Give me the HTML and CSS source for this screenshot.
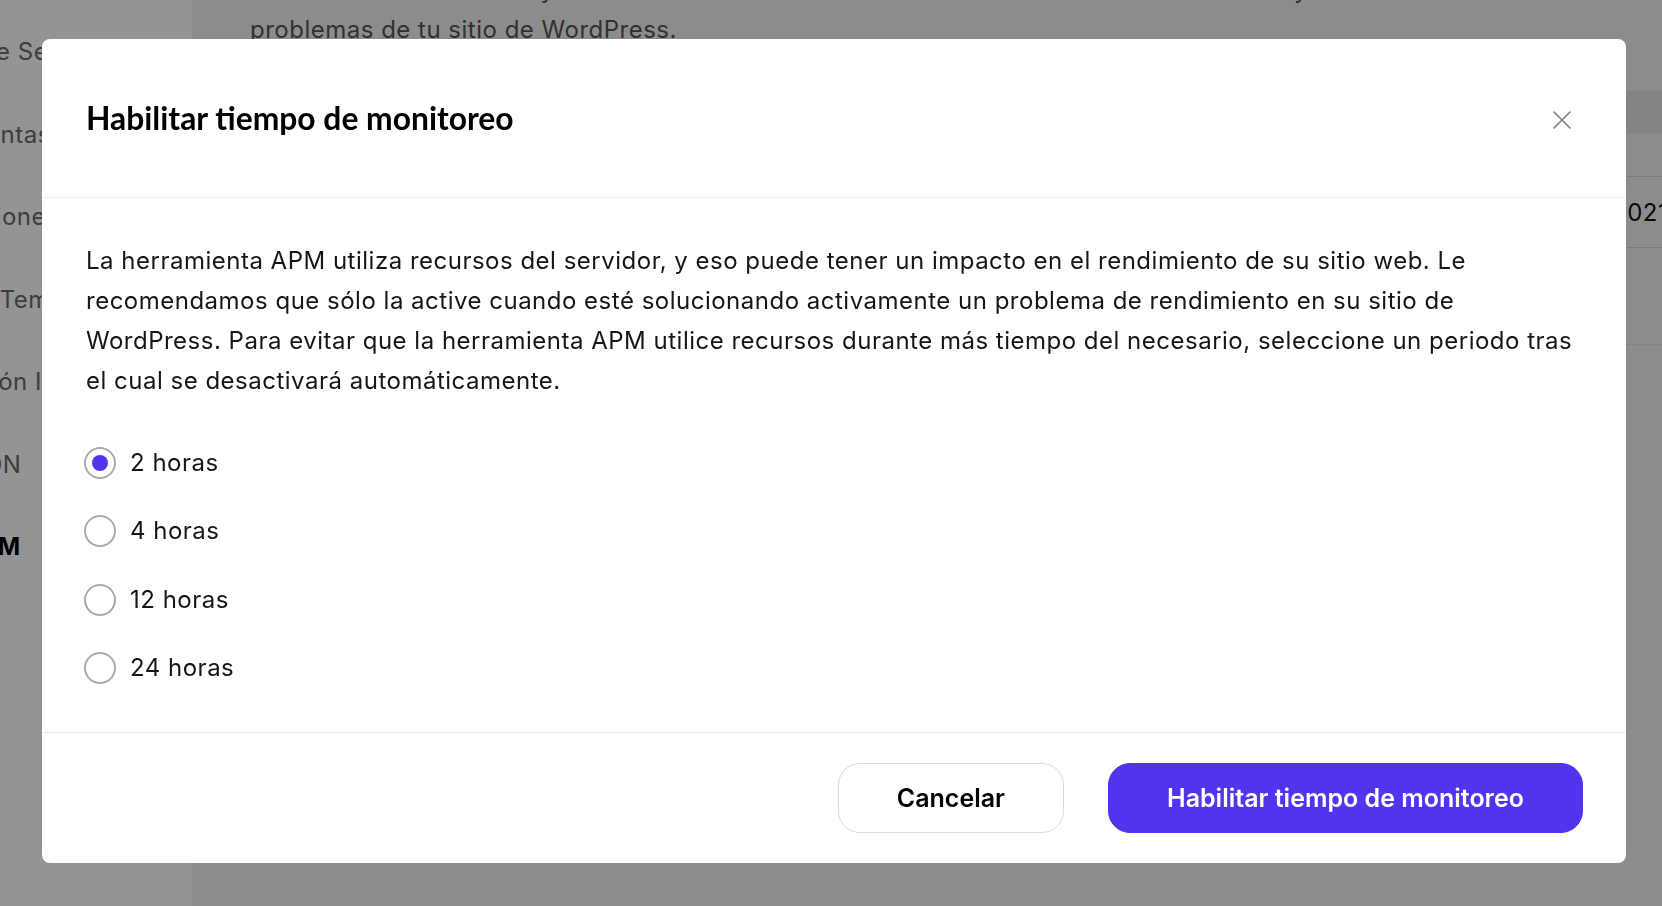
FILE: index.html
```html
<!DOCTYPE html>
<html lang="es">
<head>
<meta charset="utf-8">
<title>Habilitar tiempo de monitoreo</title>
<link rel="stylesheet" href="styles.css">
</head>
<body>
<div class="page">
  <aside class="sidebar">
    <nav class="nav">
      <div class="nav-item">Copias de Seguridad</div>
      <div class="nav-item">Herramientas</div>
      <div class="nav-item">Redirecciones</div>
      <div class="nav-item nav-item--plugins">Plugins y Temas</div>
      <div class="nav-item nav-item--ip">Denegación IP</div>
      <div class="nav-item nav-item--cdn">Kinsta CDN</div>
      <div class="nav-item nav-item--active">Kinsta APM</div>
    </nav>
  </aside>
  <main class="main">
    <p class="intro">La herramienta APM te ayuda a identificar los cuellos de botella del rendimiento de PHP y a solucionar los problemas de tu sitio de WordPress.</p>
    <div class="table">
      <div class="thead"></div>
      <div class="trow trow--short"></div>
      <div class="trow trow--data"><span class="cell-spacer"></span><span class="cell">2021-11-05 10:32</span></div>
      <div class="trow trow--tall"></div>
    </div>
  </main>
</div>
<div class="overlay"></div>
<div class="modal" role="dialog" aria-labelledby="modal-title">
  <header class="modal-header">
    <h2 class="modal-title" id="modal-title">Habilitar tiempo de monitoreo</h2>
    <button class="close-btn" aria-label="Cerrar">
      <svg width="18" height="18" viewBox="0 0 18 18"><path d="M1 1L17 17M17 1L1 17" stroke="#7b7b7b" stroke-width="1.6" fill="none" stroke-linecap="round"/></svg>
    </button>
  </header>
  <section class="modal-body">
    <p class="modal-text">La herramienta APM utiliza recursos del servidor, y eso puede tener un impacto en el rendimiento de su sitio web. Le recomendamos que sólo la active cuando esté solucionando activamente un problema de rendimiento en su sitio de WordPress. Para evitar que la herramienta APM utilice recursos durante más tiempo del necesario, seleccione un periodo tras el cual se desactivará automáticamente.</p>
    <div class="options">
      <label class="option"><span class="radio radio--checked"><span class="radio-dot"></span></span><span class="option-label">2 horas</span></label>
      <label class="option"><span class="radio"></span><span class="option-label">4 horas</span></label>
      <label class="option"><span class="radio"></span><span class="option-label">12 horas</span></label>
      <label class="option"><span class="radio"></span><span class="option-label">24 horas</span></label>
    </div>
  </section>
  <footer class="modal-footer">
    <button class="btn btn--secondary">Cancelar</button>
    <button class="btn btn--primary">Habilitar tiempo de monitoreo</button>
  </footer>
</div>
</body>
</html>
```

FILE: styles.css
```css
html, body {
  margin: 0;
  padding: 0;
}
body {
  width: 1662px;
  height: 906px;
  overflow: hidden;
  font-family: Inter, "Noto Sans", sans-serif;
  color: #1a1a1a;
  background: #ffffff;
}
.page {
  display: flex;
  height: 906px;
}
.sidebar {
  width: 192px;
  flex: none;
  background: #ffffff;
  overflow: hidden;
}
.nav {
  margin-left: -108px;
  padding-top: 32px;
  display: flex;
  flex-direction: column;
  gap: 42.5px;
}
.nav-item {
  font-size: 24px;
  line-height: 40px;
  letter-spacing: 0.5px;
  color: #6a6a6a;
  white-space: nowrap;
}
.nav-item--plugins {
  margin-left: -7px;
}
.nav-item--ip {
  margin-left: -5px;
}
.nav-item--cdn {
  margin-left: -6px;
}
.nav-item--active {
  margin-left: -13px;
  color: #000000;
  font-weight: 700;
}
.main {
  flex: 1;
  background: #f2f2f2;
  overflow: hidden;
}
.intro {
  margin: -30px 0 0 58px;
  width: 1300px;
  font-size: 24px;
  line-height: 40px;
  letter-spacing: 0.5px;
  color: #555555;
}
.table {
  margin: 41px 0 0 58px;
}
.thead {
  height: 43px;
  background: #e4e4e4;
}
.trow {
  border-bottom: 1px solid #d4d4d4;
}
.trow--short {
  height: 42px;
}
.trow--data {
  height: 70px;
  display: flex;
  align-items: center;
}
.cell-spacer {
  width: 1362px;
  flex: none;
}
.cell {
  font-size: 24px;
  letter-spacing: 0.5px;
  color: #111111;
  white-space: nowrap;
}
.trow--tall {
  height: 96px;
  border-bottom-color: #e2e2e2;
}
.overlay {
  position: fixed;
  inset: 0;
  background: rgba(0, 0, 0, 0.42);
}
.modal {
  position: fixed;
  left: 42px;
  top: 39px;
  width: 1584px;
  height: 824px;
  background: #ffffff;
  border-radius: 8px;
  display: flex;
  flex-direction: column;
  overflow: hidden;
}
.modal-header {
  height: 159px;
  box-sizing: border-box;
  flex: none;
  padding: 0 44px;
  display: flex;
  align-items: center;
  justify-content: space-between;
  border-bottom: 1px solid #ececec;
}
.modal-title {
  margin: 0;
  font-family: Lato, "Noto Sans", sans-serif;
  font-weight: 700;
  font-size: 31.8px;
  color: #000000;
}
.close-btn {
  width: 40px;
  height: 40px;
  margin-top: 4px;
  padding: 0;
  border: 0;
  background: transparent;
  display: flex;
  align-items: center;
  justify-content: center;
}
.modal-body {
  flex: 1;
  padding: 43px 44px 0;
}
.modal-text {
  margin: 0;
  font-size: 24px;
  line-height: 40px;
  letter-spacing: 0.5px;
  color: #161616;
}
.options {
  margin-top: 46px;
  display: flex;
  flex-direction: column;
  gap: 36.4px;
}
.option {
  display: flex;
  align-items: center;
  gap: 14px;
  height: 32px;
  margin-left: -2px;
}
.radio {
  width: 32px;
  height: 32px;
  box-sizing: border-box;
  border: 2px solid #a9a9b1;
  border-radius: 50%;
  display: flex;
  align-items: center;
  justify-content: center;
  background: #ffffff;
}
.radio-dot {
  width: 16px;
  height: 16px;
  border-radius: 50%;
  background: #5333ed;
}
.option-label {
  font-size: 24px;
  line-height: 32px;
  letter-spacing: 0.5px;
  color: #161616;
}
.modal-footer {
  flex: none;
  border-top: 1px solid #ececec;
  padding: 30px 43px 30px;
  display: flex;
  justify-content: flex-end;
  gap: 44px;
}
.btn {
  height: 70px;
  padding: 0 58px;
  border-radius: 22px;
  font-family: Inter, "Noto Sans", sans-serif;
  font-size: 25px;
  font-weight: 600;
}
.btn--secondary {
  background: #ffffff;
  border: 1px solid #d9d9d9;
  color: #000000;
}
.btn--primary {
  background: #5333ed;
  border: 1px solid #5333ed;
  color: #ffffff;
}
```
